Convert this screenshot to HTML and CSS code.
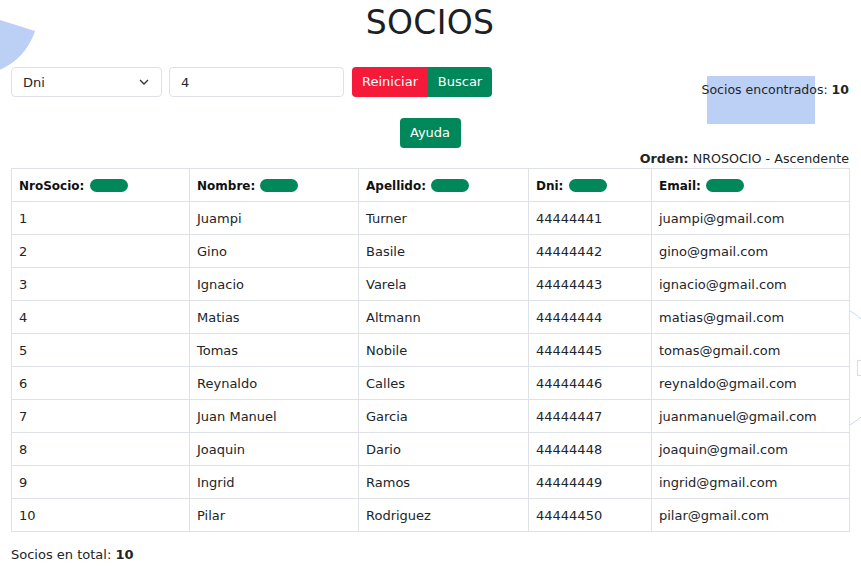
FILE: index.html
```html
<!DOCTYPE html>
<html lang="es">
<head>
<meta charset="utf-8">
<title>Socios</title>
<link rel="stylesheet" href="styles.css">
</head>
<body>
<svg class="blob" width="40" height="80" viewBox="0 0 40 80"><path d="M-25 12 L35 31 A63 63 0 0 1 -36 74 Z" fill="#bcd0f6"/></svg>
<svg class="ring" width="12" height="130" viewBox="0 0 12 130"><path d="M0 11 Q6 14 11 19" stroke="#c9d8f4" stroke-width="1" fill="none"/><path d="M0 125 Q6 121 11 117" stroke="#c9d8f4" stroke-width="1" fill="none"/><rect x="7.5" y="60.5" width="6" height="15" fill="none" stroke="#f1d3d8"/></svg>
<main class="page">
  <h1 class="title">SOCIOS</h1>
  <div class="toolbar">
    <div class="filters">
      <div class="select">
        <span>Dni</span>
        <svg width="10" height="6" viewBox="0 0 10 6"><path d="M1 1 L5 5 L9 1" stroke="#343a40" stroke-width="1.4" fill="none"/></svg>
      </div>
      <div class="input">4</div>
      <div class="btn-group">
        <button class="btn btn-red">Reiniciar</button>
        <button class="btn btn-green">Buscar</button>
      </div>
    </div>
    <div class="found"><span class="hl"></span><span class="found-text">Socios encontrados: <b>10</b></span></div>
  </div>
  <div class="help"><button class="btn btn-green btn-solo">Ayuda</button></div>
  <div class="order"><b>Orden:</b> NROSOCIO - Ascendente</div>
  <table class="grid">
    <colgroup><col class="c1"><col class="c2"><col class="c3"><col class="c4"><col class="c5"></colgroup>
    <thead>
      <tr><th>NroSocio: <span class="pill"></span></th><th>Nombre: <span class="pill"></span></th><th>Apellido: <span class="pill"></span></th><th>Dni: <span class="pill"></span></th><th>Email: <span class="pill"></span></th></tr>
    </thead>
    <tbody>
      <tr><td>1</td><td>Juampi</td><td>Turner</td><td>44444441</td><td>juampi@gmail.com</td></tr>
      <tr><td>2</td><td>Gino</td><td>Basile</td><td>44444442</td><td>gino@gmail.com</td></tr>
      <tr><td>3</td><td>Ignacio</td><td>Varela</td><td>44444443</td><td>ignacio@gmail.com</td></tr>
      <tr><td>4</td><td>Matias</td><td>Altmann</td><td>44444444</td><td>matias@gmail.com</td></tr>
      <tr><td>5</td><td>Tomas</td><td>Nobile</td><td>44444445</td><td>tomas@gmail.com</td></tr>
      <tr><td>6</td><td>Reynaldo</td><td>Calles</td><td>44444446</td><td>reynaldo@gmail.com</td></tr>
      <tr><td>7</td><td>Juan Manuel</td><td>Garcia</td><td>44444447</td><td>juanmanuel@gmail.com</td></tr>
      <tr><td>8</td><td>Joaquin</td><td>Dario</td><td>44444448</td><td>joaquin@gmail.com</td></tr>
      <tr><td>9</td><td>Ingrid</td><td>Ramos</td><td>44444449</td><td>ingrid@gmail.com</td></tr>
      <tr><td>10</td><td>Pilar</td><td>Rodriguez</td><td>44444450</td><td>pilar@gmail.com</td></tr>
    </tbody>
  </table>
  <p class="total">Socios en total: <b>10</b></p>
</main>
</body>
</html>
```

FILE: styles.css
```css
* { box-sizing: border-box; }
html, body { margin: 0; padding: 0; background: #fff; }
body {
  font-family: "DejaVu Sans", "Liberation Sans", sans-serif;
  font-size: 13px;
  color: #212529;
  position: relative;
  overflow: hidden;
  height: 570px;
}
.blob { position: absolute; left: 0; top: 0; }
.ring { position: absolute; left: 850px; top: 300px; }
.page { padding: 0 12px 0 11px; position: relative; }
.title {
  margin: 0;
  height: 50px;
  padding-top: 3px;
  text-align: center;
  font-size: 33px;
  font-weight: 400;
  line-height: 40px;
  color: #1d1f24;
  letter-spacing: 0.3px;
}
.toolbar { display: flex; justify-content: space-between; align-items: flex-start; margin-top: 17px; height: 51px; }
.filters { display: flex; gap: 7px; }
.select {
  width: 151px; height: 30px;
  border: 1px solid #dee2e6; border-radius: 4px;
  display: flex; align-items: center; justify-content: space-between;
  padding: 0 12px 0 11px;
  color: #212529;
}
.input {
  width: 175px; height: 30px;
  border: 1px solid #dee2e6; border-radius: 4px;
  display: flex; align-items: center; padding: 0 11px;
}
.btn-group { display: flex; margin-left: 1px; }
.btn {
  font-family: inherit; font-size: 13px;
  border: 0; color: #fff; height: 30px; padding: 0 10px;
  line-height: 30px; cursor: pointer;
}
.btn-red { background: #f51a3a; border-radius: 4px 0 0 4px; width: 76px; padding: 0; }
.btn-green { background: #00875a; }
.btn-group .btn-green { border-radius: 0 4px 4px 0; width: 64px; padding: 0; }
.btn-solo { border-radius: 4px; width: 61px; padding: 0; }
.found { position: relative; padding-top: 15px; font-size: 12.5px; }
.hl { position: absolute; right: 34px; top: 9px; width: 108px; height: 48px; background: #bcd0f6; }
.found-text { position: relative; }
.help { display: flex; justify-content: center; }
.order { text-align: right; margin-top: 3px; line-height: 16px; height: 17px; font-size: 12.7px; }
.grid {
  width: 838px;
  border-collapse: collapse;
  table-layout: fixed;
}
.c1 { width: 178px; } .c2 { width: 169px; } .c3 { width: 170px; } .c4 { width: 123px; } .c5 { width: 198px; }
.grid th, .grid td {
  border: 1px solid #dee2e6;
  height: 33px;
  padding: 0 7px;
  text-align: left;
  vertical-align: middle;
  white-space: nowrap;
}
.grid th { font-weight: 700; color: #111; font-size: 12px; padding-top: 1px; }
.pill {
  display: inline-block; width: 38px; height: 13px;
  background: #00875a; border-radius: 7px; vertical-align: -2px; margin-left: 1px;
}
.total { margin: 15px 0 0; line-height: 16px; }
```
